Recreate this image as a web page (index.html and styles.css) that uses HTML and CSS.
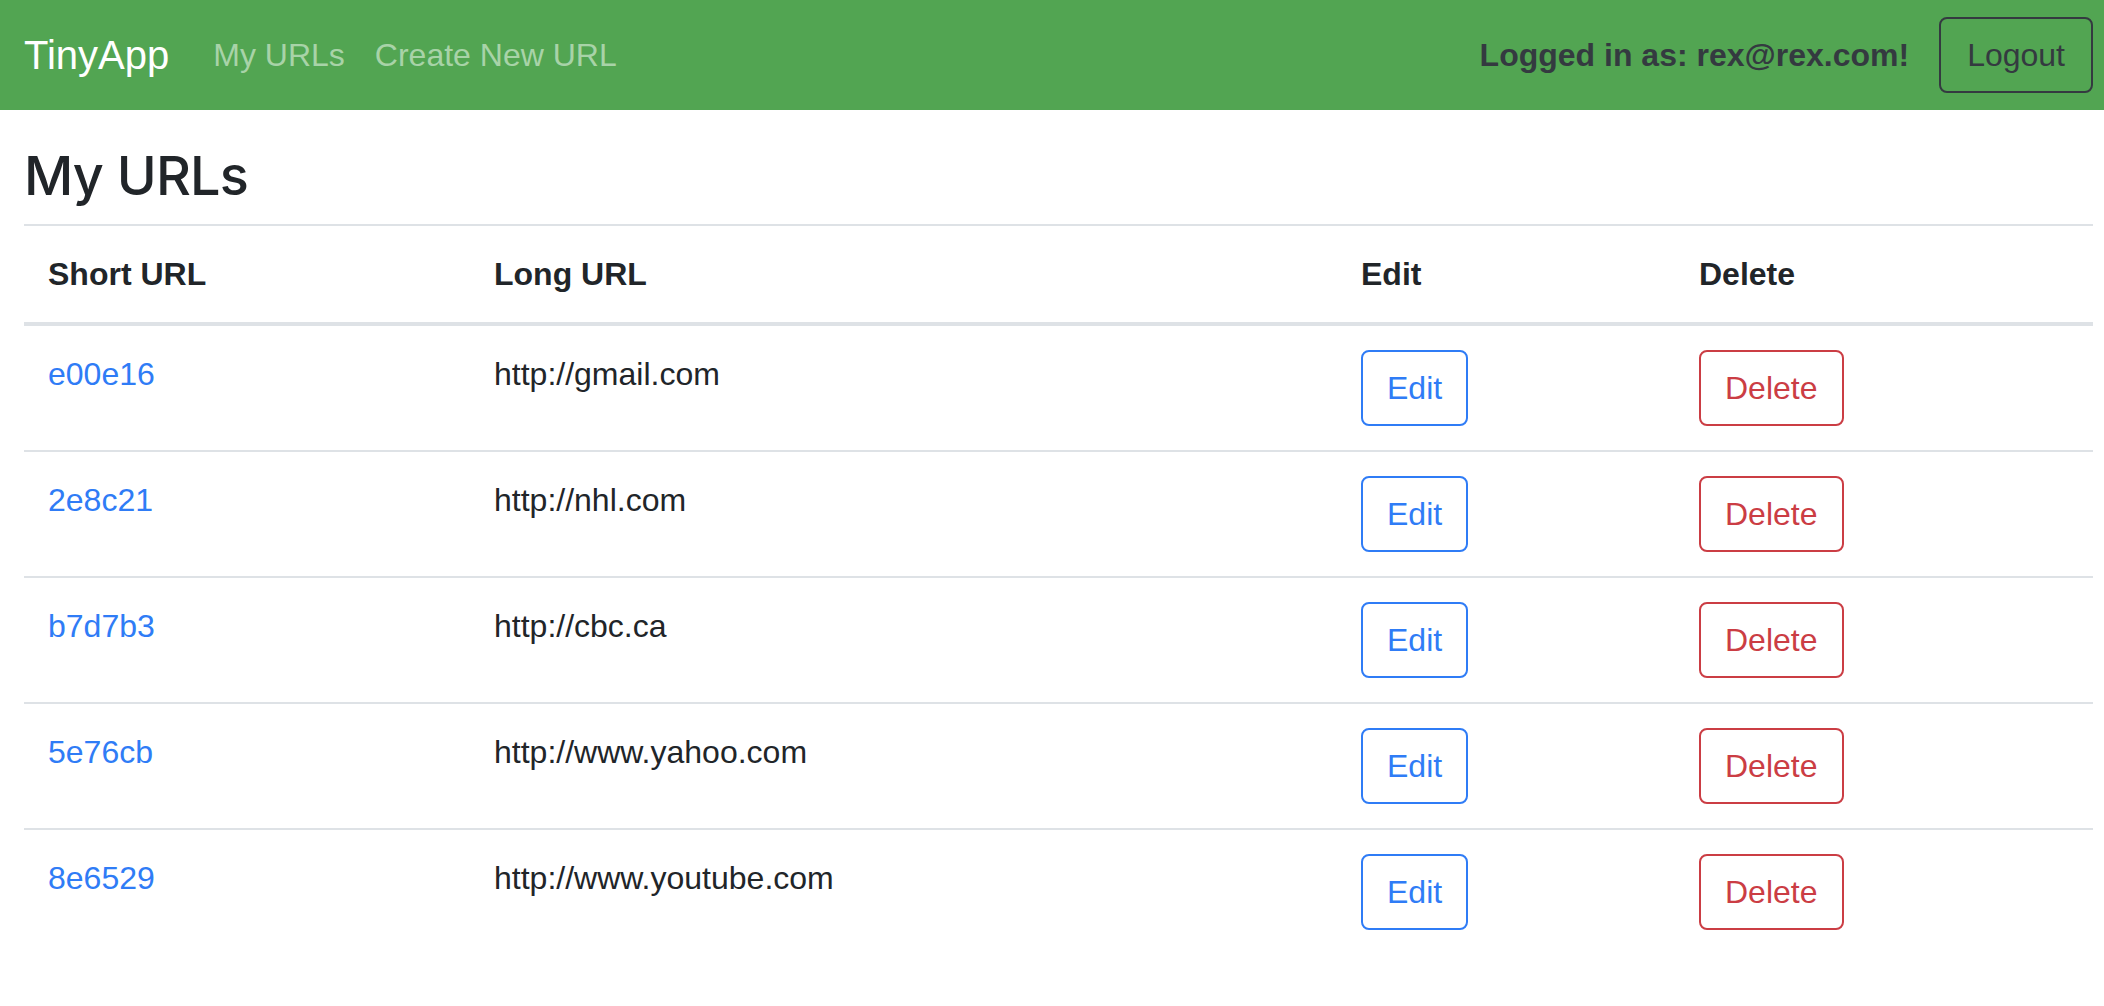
FILE: index.html
```html
<!DOCTYPE html>
<html lang="en">
<head>
<meta charset="utf-8">
<title>TinyApp - My URLs</title>
<link rel="stylesheet" href="styles.css">
</head>
<body>
<nav class="navbar">
  <a class="brand" href="#">TinyApp</a>
  <ul class="nav-links">
    <li><a class="nav-link" href="#">My URLs</a></li>
    <li><a class="nav-link" href="#">Create New URL</a></li>
  </ul>
  <div class="nav-right">
    <span class="user">Logged in as: rex@rex.com!</span>
    <button class="btn btn-dark-outline btn-logout" type="button">Logout</button>
  </div>
</nav>
<main class="main">
  <h2 class="title">My URLs</h2>
  <table class="table">
    <colgroup>
      <col class="col-short">
      <col class="col-long">
      <col class="col-edit">
      <col class="col-delete">
    </colgroup>
    <thead>
      <tr><th>Short URL</th><th>Long URL</th><th>Edit</th><th>Delete</th></tr>
    </thead>
    <tbody>
      <tr>
        <td><a class="link" href="#">e00e16</a></td>
        <td>http://gmail.com</td>
        <td><button class="btn btn-blue-outline" type="button">Edit</button></td>
        <td><button class="btn btn-red-outline" type="button">Delete</button></td>
      </tr>
      <tr>
        <td><a class="link" href="#">2e8c21</a></td>
        <td>http://nhl.com</td>
        <td><button class="btn btn-blue-outline" type="button">Edit</button></td>
        <td><button class="btn btn-red-outline" type="button">Delete</button></td>
      </tr>
      <tr>
        <td><a class="link" href="#">b7d7b3</a></td>
        <td>http://cbc.ca</td>
        <td><button class="btn btn-blue-outline" type="button">Edit</button></td>
        <td><button class="btn btn-red-outline" type="button">Delete</button></td>
      </tr>
      <tr>
        <td><a class="link" href="#">5e76cb</a></td>
        <td>http://www.yahoo.com</td>
        <td><button class="btn btn-blue-outline" type="button">Edit</button></td>
        <td><button class="btn btn-red-outline" type="button">Delete</button></td>
      </tr>
      <tr>
        <td><a class="link" href="#">8e6529</a></td>
        <td>http://www.youtube.com</td>
        <td><button class="btn btn-blue-outline" type="button">Edit</button></td>
        <td><button class="btn btn-red-outline" type="button">Delete</button></td>
      </tr>
    </tbody>
  </table>
</main>
</body>
</html>
```
FILE: styles.css
```css
* { box-sizing: border-box; }

body {
  margin: 0;
  font-family: "Liberation Sans", Arial, sans-serif;
  font-size: 32px;
  line-height: 48px;
  color: #212529;
  background: #ffffff;
}

.navbar {
  display: flex;
  align-items: center;
  height: 110px;
  padding: 0 11px 0 24px;
  background: #52a552;
}

.brand {
  font-size: 40px;
  line-height: 60px;
  color: #ffffff;
  text-decoration: none;
  margin-right: 29px;
}

.nav-links {
  display: flex;
  list-style: none;
  margin: 0;
  padding: 0;
}

.nav-link {
  display: block;
  padding: 8px 15px;
  color: #a8d3a8;
  text-decoration: none;
}

.nav-right {
  margin-left: auto;
  display: flex;
  align-items: center;
  gap: 30px;
}

.user {
  font-weight: 700;
  color: #343a40;
}

.btn {
  font-family: "Liberation Sans", Arial, sans-serif;
  font-size: 32px;
  line-height: 48px;
  padding: 12px 24px;
  border: 2px solid;
  border-radius: 8px;
  background: transparent;
  cursor: pointer;
}

.btn-logout { padding: 12px 26px; }

.btn-dark-outline { color: #343a40; border-color: #343a40; }
.btn-blue-outline { color: #2f7cf6; border-color: #2f7cf6; }
.btn-red-outline { color: #cb3d44; border-color: #cb3d44; }

.main {
  padding: 0 11px 0 24px;
}

.title {
  font-family: Inter, "Liberation Sans", sans-serif;
  font-size: 54px;
  font-weight: 500;
  line-height: 65px;
  margin: 33px 0 16px;
  letter-spacing: -0.8px;
}

.table {
  width: 100%;
  border-collapse: collapse;
  table-layout: fixed;
}

.col-short { width: 446px; }
.col-long { width: 867px; }
.col-edit { width: 338px; }
.col-delete { width: 418px; }

.table th,
.table td {
  padding: 24px;
  text-align: left;
  vertical-align: top;
  border-top: 2px solid #dee2e6;
}

.table th { font-weight: 700; }

.table thead th {
  border-bottom: 4px solid #dee2e6;
}

.link {
  color: #2f7cf6;
  text-decoration: none;
}
```
